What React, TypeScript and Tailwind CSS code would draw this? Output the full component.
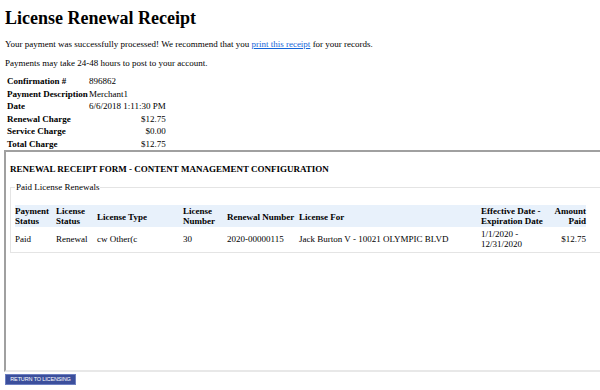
import React from "react";

const info = [
  { label: "Confirmation #", value: "896862", right: false },
  { label: "Payment Description", value: "Merchant1", right: false },
  { label: "Date", value: "6/6/2018 1:11:30 PM", right: false },
  { label: "Renewal Charge", value: "$12.75", right: true },
  { label: "Service Charge", value: "$0.00", right: true },
  { label: "Total Charge", value: "$12.75", right: true },
];

export default function App() {
  return (
    <div className="w-[600px] h-[390px] overflow-hidden bg-white text-black font-['Liberation_Serif',serif] text-[9px]">
      <div className="pl-[5px] pt-[6px]">
        <h1 className="text-[18px] font-bold leading-[24px]">License Renewal Receipt</h1>
        <p className="mt-[9px] leading-[11px]">
          Your payment was successfully processed! We recommend that you{" "}
          <a className="text-[#1565d8] underline">print this receipt</a> for your records.
        </p>
        <p className="mt-[8px] leading-[11px]">Payments may take 24-48 hours to post to your account.</p>

        <table className="mt-[6px] border-collapse whitespace-nowrap">
          <tbody>
            {info.map((r) => (
              <tr key={r.label}>
                <td className="font-bold pl-[2px] pr-0 py-0 w-[84px] leading-[12.6px]">{r.label}</td>
                <td className={`leading-[12.6px] p-0 w-[74px] ${r.right ? "text-right" : ""}`}>{r.value}</td>
              </tr>
            ))}
          </tbody>
        </table>
      </div>

      <div className="ml-[4px] -mt-px h-[222px] border-l-2 border-t-2 border-b-2 border-l-[#a0a0a0] border-t-[#a0a0a0] border-b-[#e8e8e8] pl-[4px] pt-[12px]">
        <div className="font-bold text-[9px] leading-[11px]">
          RENEWAL RECEIPT FORM - CONTENT MANAGEMENT CONFIGURATION
        </div>
        <fieldset className="mt-[7px] border border-[#e4e4e4] w-[600px] pl-[4px] pb-[3px]">
          <legend className="ml-[0px] px-[1px] leading-[11px]">Paid License Renewals</legend>
          <table className="mt-[12px] border-collapse w-[571px]">
            <thead>
              <tr className="bg-[#e8f1fb] align-middle text-left">
                <th className="font-bold leading-[10px] py-[1px] w-[41px]">Payment<br />Status</th>
                <th className="font-bold leading-[10px] py-[1px] w-[41px]">License<br />Status</th>
                <th className="font-bold leading-[10px] py-[1px] pt-[3px] w-[86px]">License Type</th>
                <th className="font-bold leading-[10px] py-[1px] w-[44px]">License<br />Number</th>
                <th className="font-bold leading-[10px] py-[1px] pt-[3px] w-[72px]">Renewal Number</th>
                <th className="font-bold leading-[10px] py-[1px] pt-[3px] w-[182px]">License For</th>
                <th className="font-bold leading-[10px] py-[1px] w-[72px]">Effective Date -<br />Expiration Date</th>
                <th className="font-bold leading-[10px] py-[1px] text-right">Amount<br />Paid</th>
              </tr>
            </thead>
            <tbody>
              <tr className="align-middle">
                <td className="pt-[2px] leading-[10px]">Paid</td>
                <td className="pt-[2px] leading-[10px]">Renewal</td>
                <td className="pt-[2px] leading-[10px]">cw Other(c</td>
                <td className="pt-[2px] leading-[10px]">30</td>
                <td className="pt-[2px] leading-[10px]">2020-00000115</td>
                <td className="pt-[2px] leading-[10px]">Jack Burton V - 10021 OLYMPIC BLVD</td>
                <td className="pt-[2px] leading-[10px]">1/1/2020 -<br />12/31/2020</td>
                <td className="pt-[2px] leading-[10px] text-right">$12.75</td>
              </tr>
            </tbody>
          </table>
        </fieldset>
      </div>

      <button className="ml-[5px] mt-[2px] h-[11px] w-[71px] bg-[#3b4f9c] border border-[#6d7fc0] text-white text-[5.5px] font-['Liberation_Sans',sans-serif] leading-[9px] tracking-tight">
        RETURN TO LICENSING
      </button>
    </div>
  );
}
